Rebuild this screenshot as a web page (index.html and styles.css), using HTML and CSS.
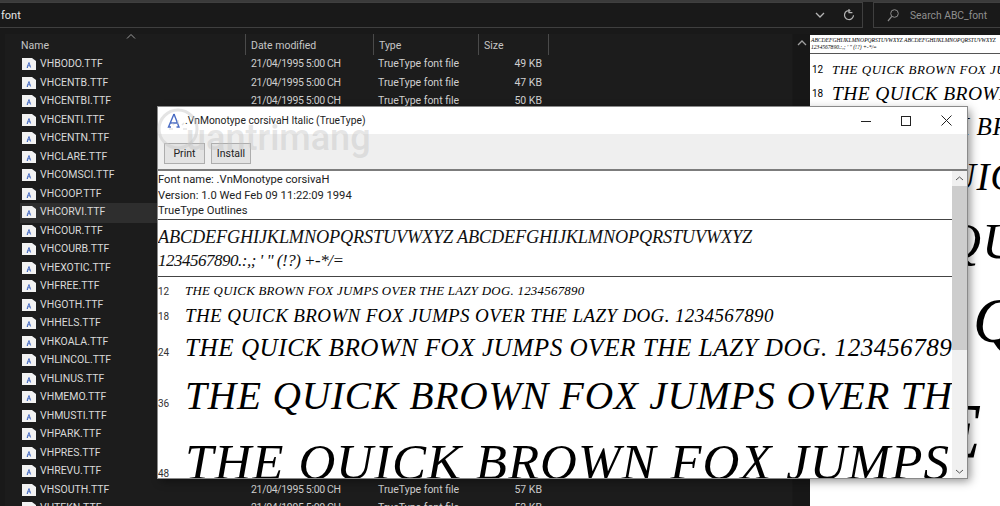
FILE: index.html
```html
<!DOCTYPE html>
<html lang="en">
<head>
<meta charset="utf-8">
<title>ABC_font</title>
<link rel="stylesheet" href="styles.css">
</head>
<body>
<svg class="defs" width="0" height="0"><defs>
<symbol id="ficon" viewBox="0 0 14 12"><path d="M0 0H10L14 3V12H0Z" fill="#f2f2f2"/><path d="M7 4.500 5 9.500H6M7 4.500 8.600 9.500M5.800 7.800H8.200" fill="none" stroke="#3a62c0" stroke-width=".9"/></symbol>
</defs></svg>
<div class="explorer">
  <div class="topbar">
    <div class="address">
      <span class="path">font</span>
      <svg class="chev" width="10" height="6" viewBox="0 0 10 6"><path d="M1 1l4 4 4-4" fill="none" stroke="#b5b5b5" stroke-width="1.3"/></svg>
      <svg class="refresh" width="12" height="12" viewBox="0 0 12 12"><path d="M10.500 6.200A4.500 4.500 0 1 1 7.500 1.800M6 0v3.600h3.400" fill="none" stroke="#b5b5b5" stroke-width="1.2"/></svg>
    </div>
    <div class="search">
      <svg width="12" height="13" viewBox="0 0 12 13"><circle cx="7.500" cy="4.500" r="3.800" fill="none" stroke="#8c8c8c"/><path d="M4.800 7.400 1 12" stroke="#8c8c8c" stroke-width="1.2"/></svg>
      <span>Search ABC_font</span>
    </div>
  </div>
  <div class="main">
    <div class="filepane">
      <div class="head">
        <div class="hname">Name<svg class="sort" width="10" height="5" viewBox="0 0 10 5"><path d="M1 4.500l4-4 4 4" fill="none" stroke="#9a9a9a"/></svg></div>
        <div class="hcell">Date modified</div>
        <div class="hcell">Type</div>
        <div class="hcell">Size</div>
        <div class="hcell hlast"></div>
      </div>
      <div class="row"><svg class="ic"><use href="#ficon"/></svg><span class="fn">VHBODO.TTF</span><span class="d">21/04/1995 5:00 CH</span><span class="t">TrueType font file</span><span class="s">49 KB</span></div>
      <div class="row"><svg class="ic"><use href="#ficon"/></svg><span class="fn">VHCENTB.TTF</span><span class="d">21/04/1995 5:00 CH</span><span class="t">TrueType font file</span><span class="s">47 KB</span></div>
      <div class="row"><svg class="ic"><use href="#ficon"/></svg><span class="fn">VHCENTBI.TTF</span><span class="d">21/04/1995 5:00 CH</span><span class="t">TrueType font file</span><span class="s">50 KB</span></div>
      <div class="row"><svg class="ic"><use href="#ficon"/></svg><span class="fn">VHCENTI.TTF</span></div>
      <div class="row"><svg class="ic"><use href="#ficon"/></svg><span class="fn">VHCENTN.TTF</span></div>
      <div class="row"><svg class="ic"><use href="#ficon"/></svg><span class="fn">VHCLARE.TTF</span></div>
      <div class="row"><svg class="ic"><use href="#ficon"/></svg><span class="fn">VHCOMSCI.TTF</span></div>
      <div class="row"><svg class="ic"><use href="#ficon"/></svg><span class="fn">VHCOOP.TTF</span></div>
      <div class="row sel"><svg class="ic"><use href="#ficon"/></svg><span class="fn">VHCORVI.TTF</span></div>
      <div class="row"><svg class="ic"><use href="#ficon"/></svg><span class="fn">VHCOUR.TTF</span></div>
      <div class="row"><svg class="ic"><use href="#ficon"/></svg><span class="fn">VHCOURB.TTF</span></div>
      <div class="row"><svg class="ic"><use href="#ficon"/></svg><span class="fn">VHEXOTIC.TTF</span></div>
      <div class="row"><svg class="ic"><use href="#ficon"/></svg><span class="fn">VHFREE.TTF</span></div>
      <div class="row"><svg class="ic"><use href="#ficon"/></svg><span class="fn">VHGOTH.TTF</span></div>
      <div class="row"><svg class="ic"><use href="#ficon"/></svg><span class="fn">VHHELS.TTF</span></div>
      <div class="row"><svg class="ic"><use href="#ficon"/></svg><span class="fn">VHKOALA.TTF</span></div>
      <div class="row"><svg class="ic"><use href="#ficon"/></svg><span class="fn">VHLINCOL.TTF</span></div>
      <div class="row"><svg class="ic"><use href="#ficon"/></svg><span class="fn">VHLINUS.TTF</span></div>
      <div class="row"><svg class="ic"><use href="#ficon"/></svg><span class="fn">VHMEMO.TTF</span></div>
      <div class="row"><svg class="ic"><use href="#ficon"/></svg><span class="fn">VHMUSTI.TTF</span></div>
      <div class="row"><svg class="ic"><use href="#ficon"/></svg><span class="fn">VHPARK.TTF</span></div>
      <div class="row"><svg class="ic"><use href="#ficon"/></svg><span class="fn">VHPRES.TTF</span></div>
      <div class="row"><svg class="ic"><use href="#ficon"/></svg><span class="fn">VHREVU.TTF</span></div>
      <div class="row"><svg class="ic"><use href="#ficon"/></svg><span class="fn">VHSOUTH.TTF</span><span class="d">21/04/1995 5:00 CH</span><span class="t">TrueType font file</span><span class="s">57 KB</span></div>
      <div class="row"><svg class="ic"><use href="#ficon"/></svg><span class="fn">VHTEKN.TTF</span><span class="d">21/04/1995 5:00 CH</span><span class="t">TrueType font file</span><span class="s">52 KB</span></div>
    </div>
    <div class="vscroll"><svg width="10" height="6" viewBox="0 0 10 6"><path d="M1 5l4-4 4 4" fill="none" stroke="#a0a0a0" stroke-width="1.3"/></svg></div>
    <div class="preview">
      <div class="pvhead">
        <div>ABCDEFGHIJKLMNOPQRSTUVWXYZ ABCDEFGHIJKLMNOPQRSTUVWXYZ</div>
        <div>1234567890.:,; ' " (!?) +-*/=</div>
      </div>
      <div class="pvrow p12"><span class="num">12</span><span class="cur">THE QUICK BROWN FOX JUMPS</span></div>
      <div class="pvrow p18"><span class="num">18</span><span class="cur">THE QUICK BROWN FOX</span></div>
      <div class="pvrow p24"><span class="cur">THE QUICK BROWN</span></div>
      <div class="pvrow p36"><span class="cur">THE QUICK</span></div>
      <div class="pvrow p48"><span class="cur">THE QUICK</span></div>
      <div class="pvrow p60"><span class="cur">THE QUICK</span></div>
      <div class="pvrow p72"><span class="cur">THE</span></div>
    </div>
  </div>
</div>

<div class="dialog">
  <div class="titlebar">
    <svg class="appicon" width="16" height="16" viewBox="0 0 16 16"><path d="M8 1 2.500 14H5M8 1l5 13h-2.500M4.500 10h7" fill="none" stroke="#4a6cc4" stroke-width="1.400"/></svg>
    <span class="ttext">.VnMonotype corsivaH Italic (TrueType)</span>
    <div class="winbtns">
      <svg width="10" height="10" viewBox="0 0 10 10"><path d="M0 5.500H10" stroke="#222"/></svg>
      <svg width="10" height="10" viewBox="0 0 10 10"><rect x=".5" y=".5" width="9" height="9" fill="none" stroke="#222"/></svg>
      <svg width="11" height="11" viewBox="0 0 11 11"><path d="M.5.500l10 10M10.500.500l-10 10" stroke="#222"/></svg>
    </div>
  </div>
  <div class="toolbar">
    <button class="btn">Print</button>
    <button class="btn">Install</button>
  </div>
  <div class="body">
    <div class="content">
      <div class="info">
        <div>Font name: .VnMonotype corsivaH</div>
        <div>Version: 1.0 Wed Feb 09 11:22:09 1994</div>
        <div>TrueType Outlines</div>
      </div>
      <div class="glyphs">
        <div class="gl1">ABCDEFGHIJKLMNOPQRSTUVWXYZ ABCDEFGHIJKLMNOPQRSTUVWXYZ</div>
        <div class="gl2">1234567890.:,; ' " (!?) +-*/=</div>
      </div>
      <div class="samples">
        <div class="sample s12"><span class="num">12</span><span class="cur">THE QUICK BROWN FOX JUMPS OVER THE LAZY DOG. 1234567890</span></div>
        <div class="sample s18"><span class="num">18</span><span class="cur">THE QUICK BROWN FOX JUMPS OVER THE LAZY DOG. 1234567890</span></div>
        <div class="sample s24"><span class="num">24</span><span class="cur">THE QUICK BROWN FOX JUMPS OVER THE LAZY DOG. 1234567890</span></div>
        <div class="sample s36"><span class="num">36</span><span class="cur">THE QUICK BROWN FOX JUMPS OVER THE LAZY DOG.</span></div>
        <div class="sample s48"><span class="num">48</span><span class="cur">THE QUICK BROWN FOX JUMPS OVER THE LAZY DOG.</span></div>
      </div>
    </div>
    <div class="dscroll">
      <svg width="9" height="5" viewBox="0 0 9 5"><path d="M1 4l3.500-3 3.500 3" fill="none" stroke="#555"/></svg>
      <div class="thumb"></div>
      <svg class="down" width="9" height="5" viewBox="0 0 9 5"><path d="M1 1l3.500 3 3.500-3" fill="none" stroke="#555"/></svg>
    </div>
  </div>
</div>

<div class="watermark">
  <svg width="42" height="50" viewBox="0 0 42 50"><circle cx="21" cy="21" r="19" fill="none" stroke="#c9c9c9" stroke-opacity=".5" stroke-width="3"/><path d="M21 12v4M12 21h4M26 21h4M15 15l2 2M27 15l-2 2" stroke="#c9c9c9" stroke-opacity=".5" stroke-width="1.500"/></svg>
  <span>uantrimang</span>
</div>
</body>
</html>
```
FILE: styles.css
```css
* { box-sizing: border-box; }
html, body { margin: 0; padding: 0; width: 1000px; height: 506px; overflow: hidden; }
body { position: relative; background: #191919; font-family: Roboto, sans-serif; }
.defs { display: block; height: 0; }
.explorer { width: 1000px; height: 506px; display: flex; flex-direction: column; border-top: 2px solid #3a3a3a; background: #191919; color: #dcdcdc; font-family: Roboto, sans-serif; }
.topbar { height: 32px; display: flex; gap: 10px; padding-bottom: 4px; flex: none; }
.address { width: 863px; height: 26px; border: 1px solid #3f3f3f; border-left: 0; display: flex; align-items: center; padding-left: 1px; background: #191919; flex: none; }
.path { font-size: 11px; color: #e6e6e6; flex: 1; }
.chev { margin-right: 18px; }
.refresh { margin-right: 7px; }
.search { flex: 1; height: 26px; border: 1px solid #3f3f3f; border-right: 0; display: flex; align-items: center; gap: 11px; padding-left: 13px; color: #8f8f8f; font-size: 10.300px; }
.main { flex: 1; display: flex; min-height: 0; padding-left: 5px; }
.filepane { width: 787px; background: #1c1c1c; overflow: hidden; }
.head { display: grid; grid-template-columns: 240px 128px 105px 70px 1fr; height: 21px; font-size: 10.500px; color: #c5c5c5; }
.hname { padding: 5px 0 0 16px; position: relative; }
.sort { position: absolute; left: 121px; top: 0; }
.hcell { border-left: 1px solid #4a4a4a; padding: 5px 0 0 5px; height: 21px; }
.hlast { height: 21px; }
.row { position: relative; height: 18.500px; display: grid; grid-template-columns: 240px 127px 105px 65px; align-items: center; font-size: 10.500px; color: #d9d9d9; line-height: 18px; }
.row.sel::before { content: ""; position: absolute; left: 15px; width: 225px; top: 0; bottom: -1px; background: #2e2e2e; }
.ic { position: absolute; left: 17px; top: 3px; width: 14px; height: 12px; }
.fn { position: relative; padding-left: 35px; white-space: nowrap; }
.d, .t { padding-left: 6px; white-space: nowrap; color: #cfcfcf; }
.d { letter-spacing: -.33px; }
.s { text-align: right; white-space: nowrap; color: #cfcfcf; }
.vscroll { width: 17px; margin-left: 1px; background: #171717; display: flex; justify-content: center; padding-top: 6px; }
.preview { flex: 1; margin-top: 1px; background: #fff; color: #000; overflow: hidden; font-family: "Liberation Serif", serif; white-space: nowrap; min-width: 0; }
.pvhead { height: 19px; border-bottom: 1px solid #555; font-style: italic; font-size: 5.600px; line-height: 7px; padding: 2px 0 0 1px; }
.pvrow { display: flex; align-items: center; padding-left: 22px; }
.pvrow .num { font-family: Roboto, sans-serif; font-style: normal; font-size: 10px; width: 22px; margin-left: -22px; padding-left: 2px; flex: none; }
.pvrow .cur { font-family: "Liberation Serif", serif; font-style: italic; line-height: 1; }
.p12 { height: 18px; margin-top: 6px; } .p12 .cur { font-size: 13px; letter-spacing: .5px; }
.p18 { height: 31px; } .p18 .cur { font-size: 19.500px; letter-spacing: .4px; }
.p24 { height: 34px; } .p24 .cur { font-size: 25px; letter-spacing: .7px; }
.p36 { height: 66px; } .p36 .cur { font-size: 39px; letter-spacing: .8px; }
.p48 { height: 64px; } .p48 .cur { font-size: 51px; letter-spacing: .8px; }
.p60 { height: 96px; } .p60 .cur { font-size: 64px; letter-spacing: 1px; }
.p72 { height: 124px; } .p72 .cur { font-size: 78px; letter-spacing: 1px; }
.dialog { position: absolute; left: 158px; top: 107px; width: 809px; height: 371px; background: #fff; color: #111; box-shadow: 0 0 0 1px #8a8a8a, 3px 3px 9px rgba(0,0,0,.45); display: flex; flex-direction: column; font-family: Roboto, sans-serif; overflow: hidden; }
.titlebar { height: 27px; display: flex; align-items: center; font-size: 10.300px; padding-left: 8px; flex: none; }
.appicon { margin-right: 3px; }
.ttext { flex: 1; color: #222; }
.winbtns { display: flex; align-items: center; gap: 30px; padding-right: 15px; }
.toolbar { height: 37px; flex: none; background: #efefef; border-bottom: 2px solid #7c7c7c; display: flex; gap: 6px; padding: 9px 0 0 6px; }
.btn { width: 41px; height: 21px; border: 1px solid #adadad; background: #e3e3e3; font: 10.500px Roboto, sans-serif; color: #222; padding: 0; }
.btn + .btn { width: 40px; }
.body { flex: 1; display: flex; min-height: 0; }
.content { flex: 1; min-width: 0; overflow: hidden; white-space: nowrap; }
.info { height: 49px; border-bottom: 1px solid #444; font-size: 11.200px; line-height: 15.700px; padding-top: 1px; color: #222; }
.glyphs { height: 57px; border-bottom: 1px solid #444; font: italic 18.300px/23px "Liberation Serif", serif; padding-top: 6px; color: #111; }
.gl1 { letter-spacing: -.18px; }
.gl2 { font-size: 17px; letter-spacing: -.5px; }
.sample { display: flex; align-items: center; }
.sample .num { width: 27px; flex: none; font-size: 10px; color: #333; }
.sample .cur { font-family: "Liberation Serif", serif; font-style: italic; color: #000; line-height: 1; }
.s12 { height: 28px; } .s12 .cur { font-size: 12.900px; letter-spacing: .02em; }
.s18 { height: 20px; } .s18 .num { margin-top: 2px; } .s18 .cur { font-size: 19px; letter-spacing: .02em; }
.s24 { height: 46px; } .s24 .num { margin-top: 8px; } .s24 .cur { font-size: 25.200px; letter-spacing: .02em; }
.s36 { height: 52px; } .s36 .num { margin-top: 12px; } .s36 .cur { font-size: 39.400px; letter-spacing: .02em; }
.s48 { height: 78px; } .s48 .num { margin-top: 22px; } .s48 .cur { font-size: 51px; letter-spacing: .02em; }
.dscroll { width: 15px; flex: none; background: #f0f0f0; display: flex; flex-direction: column; align-items: center; padding: 5px 0 4px; }
.thumb { width: 15px; height: 164px; background: #cdcdcd; margin-top: 5px; }
.down { margin-top: auto; }
.watermark { position: absolute; left: 157px; top: 108px; display: flex; align-items: flex-end; pointer-events: none; color: rgba(190,190,190,.4); font: 500 36px Roboto, sans-serif; }
.watermark span { margin-left: -13px; line-height: 40px; letter-spacing: 0; }
```
